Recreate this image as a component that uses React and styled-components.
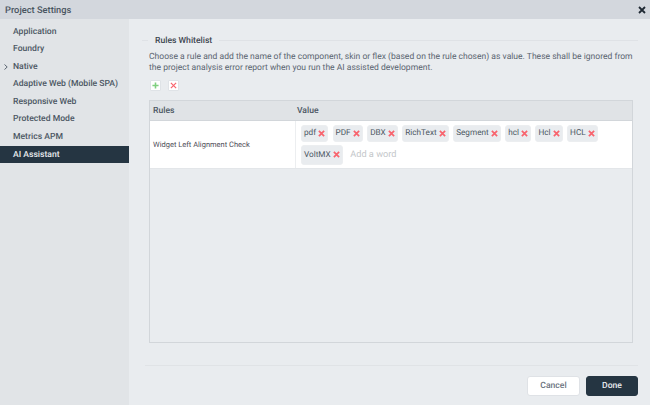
import React from 'react'
import styled, { createGlobalStyle } from 'styled-components'

const Global = createGlobalStyle`
  html, body { margin: 0; padding: 0; }
  body {
    font-family: Roboto, "Liberation Sans", sans-serif;
    background: #e9ecef;
    text-rendering: geometricPrecision;
  }
  button { text-rendering: geometricPrecision; }
`

const Dialog = styled.div`
  width: 650px;
  height: 405px;
  display: flex;
  flex-direction: column;
  overflow: hidden;
  background: #e9ecef;
`

const TitleBar = styled.div`
  height: 19px;
  flex: none;
  display: flex;
  align-items: center;
  justify-content: space-between;
  padding: 0 4px 0 5px;
  background: #d3d7dd;
  color: #4a5561;
  font-size: 9.3px;
  font-weight: 500;
`

const Title = styled.span`
  margin-top: 2px;
`

const Close = styled.svg`
  width: 8px;
  height: 8px;
`

const Body = styled.div`
  flex: 1;
  display: flex;
  min-height: 0;
`

const Sidebar = styled.nav`
  width: 129px;
  flex: none;
  padding-top: 3.5px;
  background: #e1e4e7;
`

const NavItem = styled.div`
  position: relative;
  height: 17.6px;
  line-height: 18.8px;
  padding-left: 13px;
  font-size: 8.6px;
  font-weight: 500;
  white-space: nowrap;
  color: ${p => (p.$active ? '#e9ecef' : '#4c5763')};
  background: ${p => (p.$active ? '#253542' : 'transparent')};
`

const Chevron = styled.svg`
  position: absolute;
  left: 4px;
  top: 6px;
  width: 4px;
  height: 6px;
`

const Main = styled.main`
  flex: 1;
  display: flex;
  flex-direction: column;
  padding: 15px 12px 9px 16px;
`

const Legend = styled.div`
  display: flex;
  align-items: center;
  gap: 7px;
  height: 15px;
  margin-left: -3px;
  font-size: 8.6px;
  font-weight: 500;
  color: #3d4650;

  &::before {
    content: '';
    width: 6px;
    height: 1px;
    margin-top: -2px;
    background: #dfe2e6;
  }

  &::after {
    content: '';
    flex: 1;
    height: 1px;
    margin-top: -2px;
    background: #dfe2e6;
  }
`

const Description = styled.p`
  margin: 3px 0 0 4px;
  font-size: 8.55px;
  line-height: 11px;
  color: #5a646f;
`

const Tools = styled.div`
  display: flex;
  gap: 7px;
  margin: 6px 0 0 5px;
`

const ToolButton = styled.button`
  width: 11px;
  height: 11px;
  padding: 0;
  display: flex;
  align-items: center;
  justify-content: center;
  background: #fff;
  border: 1px solid #dfe3e7;
  border-radius: 1px;

  svg { width: 7px; height: 7px; }
`

const Table = styled.div`
  width: 484px;
  height: 245px;
  margin: 9px 0 0 4px;
  box-sizing: border-box;
  border: 1px solid #d2d6da;
  background: #e9ecef;
`

const HeaderRow = styled.div`
  display: flex;
  height: 20px;
  padding-top: 1px;
  box-sizing: border-box;
  align-items: center;
  background: #e0e3e6;
  border-bottom: 1px solid #d2d6da;
  font-size: 8.6px;
  font-weight: 500;
  color: #4c5763;
`

const RuleHead = styled.div`
  width: 147px;
  padding-left: 3px;
  box-sizing: border-box;
`

const DataRow = styled.div`
  display: flex;
  height: 47px;
  background: #fff;
  border-bottom: 1px solid #e3e6e9;
`

const RuleCell = styled.div`
  width: 146px;
  display: flex;
  align-items: center;
  padding-left: 3px;
  box-sizing: border-box;
  border-right: 1px solid #eceef0;
  font-size: 7.5px;
  color: #4f4e58;
`

const Tags = styled.div`
  flex: 1;
  display: flex;
  flex-wrap: wrap;
  align-content: flex-start;
  gap: 3px 4.5px;
  padding: 4px 0 0 5px;
`

const Tag = styled.span`
  height: ${p => (p.$tall ? '20px' : '17px')};
  display: flex;
  align-items: center;
  gap: 2px;
  padding: 0 2px;
  box-sizing: border-box;
  background: #e9ecef;
  border: 1px solid #eceef0;
  border-radius: 3px;
  font-size: 8.2px;
  color: #4c5763;
  svg { width: 7px; height: 7px; flex: none; }
`

const WordInput = styled.span`
  height: 20px;
  display: flex;
  align-items: center;
  margin-left: 3px;
  font-size: 9.2px;
  color: #c4c7ca;
`

const Footer = styled.div`
  margin-top: 22px;
  padding-top: 10px;
  display: flex;
  justify-content: flex-end;
  gap: 6px;
  border-top: 1px solid #e0e3e6;
`

const Action = styled.button`
  width: ${p => (p.$primary ? '52px' : '53px')};
  height: 20px;
  padding: 0;
  border-radius: 3px;
  font-family: inherit;
  font-size: 8.6px;
  font-weight: 500;
  border: 1px solid ${p => (p.$primary ? '#253542' : '#dfe2e6')};
  background: ${p => (p.$primary ? '#253542' : '#fff')};
  color: ${p => (p.$primary ? '#e9ecef' : '#6b7480')};
`

const Cross = ({ color = '#f8646e', width = 2 }) => (
  <svg viewBox="0 0 8 8">
    <path d="M1 1 L7 7 M7 1 L1 7" stroke={color} strokeWidth={width} fill="none" />
  </svg>
)

const Plus = () => (
  <svg viewBox="0 0 8 8">
    <path d="M4 0.5 V7.5 M0.5 4 H7.5" stroke="#7fd07f" strokeWidth="1.8" fill="none" />
  </svg>
)

const nav = [
  'Application',
  'Foundry',
  'Native',
  'Adaptive Web (Mobile SPA)',
  'Responsive Web',
  'Protected Mode',
  'Metrics APM',
  'AI Assistant',
]

const words = ['pdf', 'PDF', 'DBX', 'RichText', 'Segment', 'hcl', 'Hcl', 'HCL', 'VoltMX']

export default function App() {
  return (
    <Dialog>
      <Global />
      <TitleBar>
        <Title>Project Settings</Title>
        <Close viewBox="0 0 8 8">
          <path d="M1 1 L7 7 M7 1 L1 7" stroke="#1f2933" strokeWidth="1.8" fill="none" />
        </Close>
      </TitleBar>
      <Body>
        <Sidebar>
          {nav.map(item => (
            <NavItem key={item} $active={item === 'AI Assistant'}>
              {item === 'Native' && (
                <Chevron viewBox="0 0 4 6">
                  <path d="M0.5 0.5 L3.2 3 L0.5 5.5" stroke="#4c5763" strokeWidth="0.9" fill="none" />
                </Chevron>
              )}
              {item}
            </NavItem>
          ))}
        </Sidebar>
        <Main>
          <Legend>Rules Whitelist</Legend>
          <Description>
            Choose a rule and add the name of the component, skin or flex (based on the rule chosen) as value. These shall be ignored from the project analysis error report when you run the AI assisted development.
          </Description>
          <Tools>
            <ToolButton><Plus /></ToolButton>
            <ToolButton><Cross width={1.4} /></ToolButton>
          </Tools>
          <Table>
            <HeaderRow>
              <RuleHead>Rules</RuleHead>
              <div>Value</div>
            </HeaderRow>
            <DataRow>
              <RuleCell>Widget Left Alignment Check</RuleCell>
              <Tags>
                {words.map(word => (
                  <Tag key={word} $tall={word === 'VoltMX'}>{word}<Cross /></Tag>
                ))}
                <WordInput>Add a word</WordInput>
              </Tags>
            </DataRow>
          </Table>
          <Footer>
            <Action>Cancel</Action>
            <Action $primary>Done</Action>
          </Footer>
        </Main>
      </Body>
    </Dialog>
  )
}
